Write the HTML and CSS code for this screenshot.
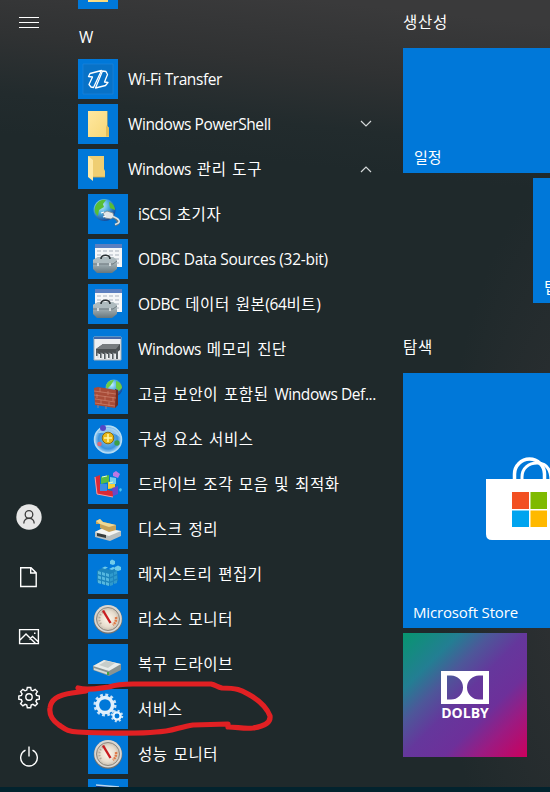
FILE: index.html
```html
<!DOCTYPE html>
<html lang="ko">
<head>
<meta charset="utf-8">
<title>시작</title>
<link rel="stylesheet" href="styles.css">
</head>
<body>
<svg width="0" height="0" class="defs" aria-hidden="true">
  <defs>
    <linearGradient id="paper" x2="1" y2="1"><stop stop-color="#ffe8a0"/><stop offset="1" stop-color="#f7d777"/></linearGradient>
    <linearGradient id="steel" x2="0" y2="1"><stop stop-color="#c9d2d4"/><stop offset=".5" stop-color="#9aa8ad"/><stop offset="1" stop-color="#68777d"/></linearGradient>
    <radialGradient id="globe" cx=".35" cy=".3" r=".8"><stop stop-color="#c8f4ff"/><stop offset=".45" stop-color="#4aaade"/><stop offset="1" stop-color="#0c3688"/></radialGradient>
    <radialGradient id="dial"><stop stop-color="#fff8ec"/><stop offset=".7" stop-color="#e6dccd"/><stop offset="1" stop-color="#c8beb0"/></radialGradient>
    <radialGradient id="bubble"><stop stop-color="#8cc8ef"/><stop offset=".7" stop-color="#3b93dd"/><stop offset="1" stop-color="#a6d4f3"/></radialGradient>
    <symbol id="toolbox" viewBox="0 0 40 40">
      <path d="M7 5h27v23H7z" fill="#f4f6f8"/><path d="M7 5h27v4H7z" fill="#5b7fc0"/>
      <path d="M9 12h23M9 16h23M9 20h23M9 24h23" stroke="#a9b2bd" stroke-dasharray="4 2"/>
      <path d="M5 21l5-3h15l4 3v9l-5 4H9l-4-4z" fill="url(#steel)"/>
      <path d="M5 21l5-3h15l4 3-4 3H9z" fill="#aebbbf"/>
      <path d="M5 25h20l4-3" fill="none" stroke="#59666b" stroke-width=".7"/>
      <path d="M13 20c0-5 9-5 9 0" fill="none" stroke="#2c3235" stroke-width="1.6"/>
      <path d="M10 24v3M22 24v3" stroke="#eef3f4" stroke-width="1.4"/>
    </symbol>
    <symbol id="gauge" viewBox="0 0 40 40">
      <circle cx="20" cy="20.5" r="14.3" fill="#77726b"/><circle cx="20" cy="19.8" r="13.8" fill="#d9d7d3"/>
      <circle cx="20" cy="20" r="11.5" fill="url(#dial)" stroke="#8d877e"/>
      <path d="M13 25a8.500 8.500 0 0 1 4-13" fill="none" stroke="#b4a99a" stroke-dasharray="1.500 1.500" stroke-width="2"/>
      <path d="M28 18a8.500 8.500 0 0 1-3 8" fill="none" stroke="#df7a48" stroke-width="2.500" stroke-dasharray="2 .7"/>
      <path d="M15 11.500L22.500 24" stroke="#c81c20" stroke-width="2.400"/>
    </symbol>
  </defs>
</svg>
<div class="start">
  <div class="menu">
    <nav class="rail">
      <svg class="burger" viewBox="0 0 20 12"><path d="M0 .5h20M0 5.500h20M0 10.500h20"/></svg>
      <div class="rail-bottom">
        <svg viewBox="0 0 26 26"><circle cx="13" cy="13" r="12.700" fill="#e6e6e6"/><g fill="none" stroke="#3d3d3d" stroke-width="1.300"><circle cx="13" cy="10.500" r="3.800"/><path d="M7.800 19.500c0-7 10.400-7 10.400 0"/></g></svg>
        <svg viewBox="0 0 26 26" class="line"><path d="M4.700 3.700h10.300l5.200 5.200v13.600H4.700zM14.700 3.700v5.300H20"/></svg>
        <svg viewBox="0 0 26 26" class="line"><path d="M3.600 5.600h18.800v14H3.600zM4 16l6-6 9.500 9.500M13.500 15.500l3-3 5.500 5"/><path d="M18 8.500h1.500V10H18z" fill="#fff" stroke="none"/></svg>
        <svg viewBox="0 0 26 26" class="line"><circle cx="13" cy="13" r="3.200"/><path d="M11.300 3.500h3.400l.5 2.600 1.700.7 2.200-1.500 2.300 2.300-1.500 2.300.7 1.600 2.700.5v3.200l-2.700.5-.7 1.700 1.500 2.200-2.300 2.300-2.200-1.500-1.700.7-.5 2.600h-3.400l-.5-2.600-1.700-.7-2.200 1.500-2.300-2.300 1.500-2.200-.7-1.700-2.600-.5v-3.200l2.600-.5.7-1.600-1.500-2.300 2.300-2.300 2.200 1.500 1.700-.7z"/></svg>
        <svg viewBox="0 0 26 26" class="line"><path d="M9.500 6.200a8.300 8.300 0 1 0 7 0M13 2.500V12.500"/></svg>
      </div>
    </nav>

    <main class="apps">
      <div class="row top"><span class="icon"><svg viewBox="0 0 40 40"><path d="M10 8h20v25H10z" fill="url(#paper)"/></svg></span></div>
      <h2 class="letter">W</h2>
      <div class="row"><span class="icon"><svg viewBox="0 0 40 40"><path d="M5 5h30v30H5z" fill="#0872c7" stroke="#268bdd" stroke-width=".5"/><g fill="none" stroke="#fff" stroke-width="1.300" stroke-linejoin="round"><path d="M23.500 11.500L12 14.500l-1.500 3 4 .5-3.500 7.500 2 2.500 2.500.5z"/><path d="M17.500 29l10-2.500 2.500-3-3.500-.5 3-7.500-1.500-3-3.500-.5z"/></g></svg></span><span class="name"><span class="latin">Wi-Fi Transfer</span></span></div>
      <div class="row"><span class="icon"><svg viewBox="0 0 40 40"><path d="M10 7h19v15l2 2v9H10z" fill="url(#paper)"/><path d="M29 7v14l-1 2v9.500h3V24l-1.500-2V7z" fill="#e3bd59"/></svg></span><span class="name"><span class="latin">Windows PowerShell</span></span><svg class="chev" viewBox="0 0 12 8"><path d="M1 1l5 5 5-5"/></svg></div>
      <div class="row"><span class="icon"><svg viewBox="0 0 40 40"><path d="M10 7h16v13l1 2v6H10z" fill="#efce72"/><path d="M10 7l5 4v21l-5-4z" fill="#ffe9a4"/><path d="M15 28h12" fill="none" stroke="#d4ae52" stroke-width=".8"/></svg></span><span class="name"><span class="latin">Windows</span> 관리 도구</span><svg class="chev" viewBox="0 0 12 8"><path d="M1 7l5-5 5 5"/></svg></div>

      <div class="group">
        <div class="row"><span class="icon"><svg viewBox="0 0 40 40"><circle cx="16.500" cy="16" r="11" fill="url(#globe)"/><path d="M7 13c2-6 7-8 11-7l-3 4 1 3-5 3-1 6c-3-2-4-5-3-9zM21 8c4 1 6 5 6 8l-5-2z" fill="#58bd35"/><path d="M15 19l4-2 6 2 1 4-3 2-6-1z" fill="#e2e7e9" stroke="#79878e" stroke-width=".8"/><path d="M13 19l3-1m-1 5l3-1" stroke="#fff" stroke-width="1.300"/><path d="M25 23c3 1 4 2 5 4s0 3-3 4" fill="none" stroke="#66777e" stroke-width="2.800"/><path d="M25 22.500c3 1 5 2 6 4s-1 3-4 4" fill="none" stroke="#d8e3e8" stroke-width="1.600"/></svg></span><span class="name"><span class="latin">iSCSI</span> 초기자</span></div>
        <div class="row"><span class="icon"><svg><use href="#toolbox"/></svg></span><span class="name"><span class="latin loose">ODBC Data Sources (32-bit)</span></span></div>
        <div class="row"><span class="icon"><svg><use href="#toolbox"/></svg></span><span class="name"><span class="latin">ODBC</span> 데이터 원본<span class="latin">(64</span>비트)</span></div>
        <div class="row"><span class="icon"><svg viewBox="0 0 40 40"><path d="M6 8h27v23H6z" fill="#edf0f2" stroke="#a8b1b7"/><path d="M6 8h27v2H6z" fill="#4269aa"/><path d="M8 20l7-5h17v6l-5 4H8z" fill="#4b5052"/><path d="M8 20l7-5h17l-4 5z" fill="#777c7e"/><path d="M9 21v6m4-4v6m4-6v7m4-7v6m4-6v7m4-9v9" stroke="#555d61" stroke-width="2"/><path d="M10 24v5m4-5v6m4-6v6m4-6v6m4-6v6" stroke="#d0d5d7"/></svg></span><span class="name"><span class="latin">Windows</span> 메모리 진단</span></div>
        <div class="row"><span class="icon"><svg viewBox="0 0 40 40"><circle cx="26" cy="14" r="8.500" fill="url(#globe)"/><path d="M18 12c1-4 4-6 8-6l-3 5-4 4zM28 7c4 1 6 4 6 7l-3 3-3-3z" fill="#6ccc45"/><path d="M27 15l3 1v15l-3 3z" fill="#702d24"/><path d="M6 14l4-1 18 3-1 18-20-3z" fill="#a84c38"/><path d="M6 17l22 3M6 21l22 3M7 25l20 3M7 29l20 3M12 14v4m8-1v4m-11-1v4m8-2v4m8-3v4m-12-1v4m8-2v4m-11-1v3m8-2v3" stroke="#cf8470" stroke-width=".7"/></svg></span><span class="name">고급 보안이 포함된 <span class="latin">Windows Def...</span></span></div>
        <div class="row"><span class="icon"><svg viewBox="0 0 40 40"><circle cx="20" cy="20.500" r="13.500" fill="url(#bubble)" stroke="#b6dcf3" stroke-width="1.500"/><path d="M10 14c7-8 19-6 22 4-7-6-15-4-22-4z" fill="#e4f5ff" opacity=".5"/><circle cx="20" cy="19" r="5.800" fill="#eaba19" stroke="#8c6c10"/><path d="M20 15v8m-4-4h8" stroke="#fff6a1" stroke-width="1.600"/><circle cx="15" cy="9" r="3" fill="#5447c5"/><circle cx="11.500" cy="25" r="2.300" fill="#dc6a75"/><circle cx="29" cy="24" r="2.700" fill="#3c9e47"/></svg></span><span class="name">구성 요소 서비스</span></div>
        <div class="row"><span class="icon"><svg viewBox="0 0 40 40"><path d="M7 13l5-2v14l13 2v6l-16-3z" fill="#d92a37"/><path d="M7 13l2 17 16 3" fill="none" stroke="#ff9b9b"/><path d="M13 13l8-2v7l-8 2z" fill="#59bd43"/><path d="M12 20h7v7h-7z" fill="#3d8ce5"/><path d="M20 18l7-1v7l-7 1z" fill="#f5cf35"/><path d="M22 13l6 1v6h-6z" fill="#78d1eb"/><path d="M25 9l3-2 4 3-2 4-5-2z" fill="#bc78e3"/><path d="M24 24l6-2v8l-5 2z" fill="#6949ca"/><path d="M31 25l2-1 1 2-2 2z" fill="#4ac1ed"/><path d="M14 13l5-1M21 19l4-1" stroke="#e7ffcb"/></svg></span><span class="name">드라이브 조각 모음 및 최적화</span></div>
        <div class="row"><span class="icon"><svg viewBox="0 0 40 40"><path d="M7 23l8-4 18 3v5l-11 5-15-4z" fill="#b9bfbf"/><path d="M7 23l8-4 18 3-12 5z" fill="#f4f5f2"/><path d="M9 24l9 2v3l-9-2z" fill="#363c3d"/><path d="M8 12l4-2 3 3 13 3v5l-7 2-9-4v-4H8z" fill="#c7a35a"/><path d="M8 12l4-2 3 3 13 3-7 2-9-3z" fill="#efd895"/></svg></span><span class="name">디스크 정리</span></div>
        <div class="row"><span class="icon"><svg viewBox="0 0 40 40"><path d="M9 17l5-3 8 2 7-2 1 13-10 5-11-4z" fill="#1d85bd"/><g fill="#55b8df"><path d="M10 17l3 1v3l-3-1zM14 18l3 1v3l-3-1zM18 19l3 1v3l-3-1zM10 21.500l3 1v3l-3-1zM14 22.500l3 1v3l-3-1zM18 23.500l3 1v3l-3-1zM10 26l3 1v3l-3-1zM14 27l3 1v3l-3-1zM18 28l3 1v3l-3-1z"/></g><g fill="#2f9bcd"><path d="M22 20l3-1v3l-3 1zM26 18l3-1v3l-3 1zM22 24.500l3-1v3l-3 1zM26 22.500l3-1v3l-3 1zM22 29l3-1v3l-3 1zM26 27l3-1v3l-3 1z"/></g><path d="M14 14l3-1.500 3 1-3 1.500zM21 15l4-2 3 1-4 2zM22 7l2-1.500 3 1.500v3l-2 1-3-1zM27 13l3-1.500 3 1.500v3l-3 1-3-1z" fill="#6fcbea"/></svg></span><span class="name">레지스트리 편집기</span></div>
        <div class="row"><span class="icon"><svg><use href="#gauge"/></svg></span><span class="name">리소스 모니터</span></div>
        <div class="row"><span class="icon"><svg viewBox="0 0 40 40"><path d="M5 22l11-6 17 4v6l-12 6-16-6z" fill="#899391"/><path d="M5 22l11-6 17 4-12 7z" fill="#e8ecea"/><path d="M11 21l7-4 9 2-7 5z" fill="#c6cdca"/><path d="M6 24l15 5v2L6 26z" fill="#d6dad7"/><path d="M20 28v3" stroke="#46a348" stroke-width="2"/></svg></span><span class="name">복구 드라이브</span></div>
        <div class="row"><span class="icon"><svg viewBox="0 0 40 40"><g fill="none"><circle cx="17" cy="16" r="10" stroke="#cce3f6" stroke-width="3" stroke-dasharray="2.800 2.436"/><circle cx="17" cy="16" r="7.600" stroke="#e0effb" stroke-width="3.500"/><circle cx="29" cy="27" r="5.200" stroke="#c5dff3" stroke-width="2" stroke-dasharray="2 2.084"/><circle cx="29" cy="27" r="3.600" stroke="#e7f5ff" stroke-width="2.300"/></g></svg></span><span class="name">서비스</span></div>
        <div class="row"><span class="icon"><svg><use href="#gauge"/></svg></span><span class="name">성능 모니터</span></div>
        <div class="row"><span class="icon"><svg viewBox="0 0 40 40"><path d="M8 6l23 2v24H8z" fill="#123f91"/><path d="M8 6l23 2" stroke="#b9d6ed" stroke-width="1.500"/></svg></span></div>
      </div>
    </main>

    <section class="tiles">
      <h2>생산성</h2>
      <div class="tile wide"><span class="caption">일정</span></div>
      <div class="tile next"><span class="caption">팁</span></div>
      <h2 class="second">탐색</h2>
      <div class="tile store">
        <svg viewBox="0 0 100 84"><g fill="none" stroke="#fff"><path d="M28.500 24V17a15 15 0 0 1 30 0v7" stroke-width="3.500"/><path d="M36 24V20c0-9 7-14 15-14 9 0 14 6 14 18" stroke-width="3"/></g><path d="M0 22h90v61H6q-6 0-6-6z" fill="#fff"/><path d="M26 35h17v17H26z" fill="#f25022"/><path d="M44.500 35h16.500v17H44.500z" fill="#7fba00"/><path d="M26 53.500h17v16.500H26z" fill="#00a4ef"/><path d="M44.500 53.500h16.500v16.500H44.500z" fill="#ffb900"/></svg>
        <span class="caption latin">Microsoft Store</span>
      </div>
      <div class="tile dolby">
        <svg viewBox="0 0 48 33"><path fill="#fff" fill-rule="evenodd" d="M0 0h48v33H0zM6 4.500v24h4a12 12 0 0 0 0-24zM42 4.500h-4a12 12 0 0 0 0 24h4z"/></svg>
        <span>DOLBY</span>
      </div>
    </section>
  </div>
  <div class="taskbar"></div>
  <svg class="marker" viewBox="0 0 550 792"><path d="M78 688C88 691 100 688 109 687C118 684 125 684 133 684H211C216 685 217 687 222 688C237 688 241 690 248 694C259 700 267 708 270 716C271 724 260 727 253 728C244 729 237 727 228 727V724L193 725C179 727 171 732 156 732C139 734 97 733 78 732C68 732 65 729 59 725C52 720 49 715 50 708C51 697 64 694 72 693L86 691"/></svg>
</div>
</body>
</html>
```
FILE: styles.css
```css
* { box-sizing: border-box; }
body { margin: 0; overflow: hidden; }
.defs { position: absolute; }
svg { display: block; }
.start {
  position: relative;
  width: 550px;
  height: 792px;
  overflow: hidden;
  display: flex;
  flex-direction: column;
  color: #fff;
  font: 16px/20px "Open Sans", "Noto Sans CJK KR", sans-serif;
  background:
    radial-gradient(ellipse 150px 400px at 590px 560px, rgba(54, 52, 54, .8), transparent),
    linear-gradient(186deg, #3a3a3b 25px, #303233 90px, #222b2d 150px, #1f292b 190px);
}
.menu { height: 787px; display: flex; overflow: hidden; }
.taskbar { height: 5px; background: #02232e; }

.rail {
  width: 78px;
  padding: 17px 0 17px 19px;
  display: flex;
  flex-direction: column;
  justify-content: space-between;
}
.burger { width: 20px; height: 12px; fill: none; stroke: #fff; }
.rail-bottom { display: flex; flex-direction: column; gap: 34px; margin-left: -3px; }
.rail-bottom svg { width: 26px; height: 26px; }
.line { fill: none; stroke: #fff; stroke-width: 1.4; }

.apps { width: 325px; }
.row { display: flex; align-items: center; height: 40px; margin-bottom: 5px; }
.row.top { margin: -31px 0 0; }
.letter { margin: 18px 0 12px 1px; height: 20px; font-size: 15.5px; font-weight: 400; }
.group { padding-left: 10px; }
.icon { width: 40px; height: 40px; flex: none; background: #0078d9; }
.icon svg { width: 40px; height: 40px; }
.name { margin-left: 10px; white-space: nowrap; font-size: 15.5px; letter-spacing: .6px; word-spacing: 1.2px; }
.latin { letter-spacing: -.42px; word-spacing: 0; }
.latin.loose { letter-spacing: -.28px; }
.chev { width: 12px; height: 8px; margin: 0 31px 0 auto; fill: none; stroke: #d5d9da; stroke-width: 1.2; }

.tiles { width: 147px; overflow: hidden; }
.tiles h2 { margin: 12px 0 16px; height: 20px; font-size: 15.5px; font-weight: 400; letter-spacing: .7px; white-space: nowrap; }
.tiles h2.second { margin: 34px 0 16px; }
.tile { display: flex; background: #0078d9; white-space: nowrap; }
.caption { margin: auto 0 6px 11px; font-size: 15px; }
.caption.latin { margin-left: 10px; letter-spacing: -.15px; }
.wide { width: 248px; height: 125px; }
.next { width: 124px; height: 125px; margin: 5px 0 0 130px; }
.store { width: 254px; height: 255px; flex-direction: column; }
.store svg { width: 100px; height: 84px; margin: 84px 0 0 83px; }
.dolby {
  width: 124px;
  height: 124px;
  margin-top: 5px;
  padding-top: 38px;
  flex-direction: column;
  align-items: center;
  background: linear-gradient(135deg, #07966f, #237e93 23%, #4d5799 36%, #65379c 50%, #6d309a 66%, #9b1b82 80%, #cc005d);
}
.dolby svg { width: 48px; height: 33px; }
.dolby span { font: 700 14px/18px "Open Sans", sans-serif; }

.marker {
  position: absolute;
  inset: 0;
  width: 550px;
  height: 792px;
  fill: none;
  stroke: #e12023;
  stroke-width: 5.2;
  stroke-linecap: round;
  stroke-linejoin: round;
}
```
